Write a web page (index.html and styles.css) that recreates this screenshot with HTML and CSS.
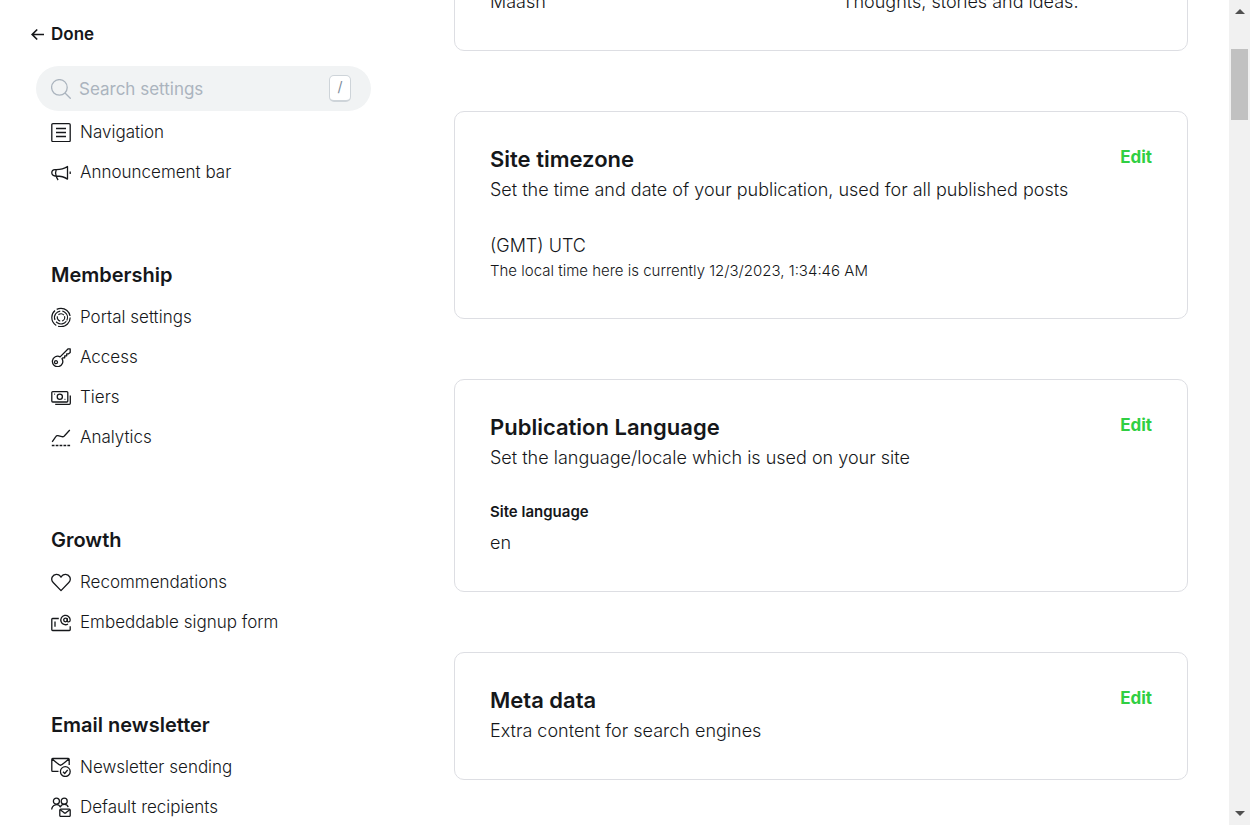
FILE: index.html
```
<!DOCTYPE html>
<html lang="en">
<head>
<meta charset="utf-8">
<meta name="viewport" content="width=device-width, initial-scale=1">
<title>Settings</title>
<link rel="stylesheet" href="styles.css">
</head>
<body>
<div class="app">
  <aside class="sidebar">
    <button class="done" type="button">
      <svg class="done-arrow" viewBox="0 0 14 14"><path d="M13 7.500H1.500M6.200 2.500 1.200 7.500l5 5"/></svg>
      <span>Done</span>
    </button>
    <div class="search">
      <svg class="icon" viewBox="0 0 20 20"><circle cx="8.4" cy="8.4" r="7.8"/><path d="m14 14 5.7 5.7"/></svg>
      <input class="search-input" type="text" placeholder="Search settings" aria-label="Search settings">
      <kbd class="key">/</kbd>
    </div>
    <nav class="nav">
      <ul class="group">
        <li><a class="item" href="#navigation"><svg class="icon" viewBox="0 0 20 20"><rect x=".8" y="1.600" width="18.4" height="18" rx="1.2"/><path d="M5 6.500h10M5 10.500h10M5 14.500h10"/></svg>Navigation</a></li>
        <li><a class="item" href="#announcement"><svg class="icon" viewBox="0 0 20 20"><path d="M5.300 7.600c5 0 8-1 11.200-3.100v12.600c-3.200-2.200-6.200-3.100-11.200-3.100H4a3.200 3.200 0 0 1 0-6.400zM19.200 9.600v2.400M5.200 7.800c-.8 2-.8 4.200 0 6.200.4 1.600 1 2.800 1.900 4"/></svg>Announcement bar</a></li>
      </ul>
      <section>
        <h2 class="group-title">Membership</h2>
        <ul class="group">
          <li><a class="item" href="#portal"><svg class="icon icon-fine" viewBox="0 0 20 20"><circle cx="10" cy="10.500" r="9.200" stroke-dasharray="17.300 2"/><circle cx="10" cy="10.500" r="6.500" stroke-dasharray="11.600 2" transform="rotate(35 10 10.500)"/><circle cx="10" cy="10.500" r="3.700" stroke-dasharray="5.900 1.850" transform="rotate(-20 10 10.500)"/></svg>Portal settings</a></li>
          <li><a class="item" href="#access"><svg class="icon" viewBox="0 0 20 20"><path d="M9.100 9.900 17.200 1.800h2v3.700l-1.600 1.300h-1.900v2h-2v2h-2l-.7.900a5.200 5.200 0 1 1-1.900-1.800z"/><circle cx="5" cy="15.200" r="1.500"/></svg>Access</a></li>
          <li><a class="item" href="#tiers"><svg class="icon" viewBox="0 0 20 20"><rect x=".8" y="4.600" width="16" height="10.400" rx="1"/><circle cx="8.800" cy="9.800" r="2.600"/><path d="M3.200 7.200h.9M13.500 12.400h.9M4.200 17.300h14.100a1 1 0 0 0 1-1V8.400"/></svg>Tiers</a></li>
          <li><a class="item" href="#analytics"><svg class="icon" viewBox="0 0 20 20"><path d="M1.200 14.800 4.800 9.600c.5-.8 1.200-1.100 2.100-.9l4 1c1 .2 1.700 0 2.400-.7l5.500-6"/><path d="M.8 18.500h18.400" stroke-dasharray="2.700 1.200"/></svg>Analytics</a></li>
        </ul>
      </section>
      <section>
        <h2 class="group-title">Growth</h2>
        <ul class="group">
          <li><a class="item" href="#recommendations"><svg class="icon" viewBox="0 0 20 20"><path d="M10 18.600 2.200 10.500A4.900 4.900 0 0 1 1.300 4.900C3.100 1.600 7.400 1.400 9.500 4.400l.5.800.5-.8c2.100-3 6.400-2.800 8.200.5a4.900 4.900 0 0 1-.9 5.600z"/></svg>Recommendations</a></li>
          <li><a class="item" href="#signup"><svg class="icon" viewBox="0 0 20 20"><path d="M7.800 6.500H1.600a.8.800 0 0 0-.8.800v10.400a.8.800 0 0 0 .8.800h16.800a.8.800 0 0 0 .8-.8v-3.400M4 9.500v5.300"/><circle cx="14.500" cy="8" r="1.800"/><path d="M16.300 6.200v2.600c0 1.600 2.900 1.600 2.900-.8a4.700 4.700 0 1 0-2.200 4"/></svg>Embeddable signup form</a></li>
        </ul>
      </section>
      <section>
        <h2 class="group-title">Email newsletter</h2>
        <ul class="group">
          <li><a class="item" href="#newsletters"><svg class="icon" viewBox="0 0 20 20"><path d="M7.500 14.300H1.700a.9.900 0 0 1-.9-.9V2.400c0-.5.4-.9.900-.9h15.600c.5 0 .9.400.9.900v5.600M1.100 2l6.800 5.600c1 .8 2.200.8 3.200 0L17.900 2"/><circle cx="14.300" cy="14.600" r="4.900"/><path d="m12 14.800 1.700 1.700 3-3.700"/></svg>Newsletter sending</a></li>
          <li><a class="item" href="#recipients"><svg class="icon" viewBox="0 0 20 20"><circle cx="5.400" cy="4.200" r="3"/><circle cx="13.200" cy="4.200" r="3"/><path d="M.7 12.600C.9 7.300 7.600 5.900 9.300 9.900c1.400-3.500 6.800-3.300 7.900.2"/><rect x="8.800" y="12.200" width="10.400" height="7.200" rx="1"/><path d="m9.200 12.800 3.700 2.800c.7.500 1.500.5 2.200 0l3.700-2.800"/></svg>Default recipients</a></li>
        </ul>
      </section>
    </nav>
  </aside>
  <main class="content">
    <section class="card card-first">
      <div class="pair">
        <p class="text">Maash</p>
        <p class="text">Thoughts, stories and ideas.</p>
      </div>
    </section>
    <section class="card">
      <header class="card-head">
        <div class="heading">
          <h3 class="title">Site timezone</h3>
          <p class="text">Set the time and date of your publication, used for all published posts</p>
        </div>
        <button class="edit" type="button">Edit</button>
      </header>
      <div>
        <p class="text">(GMT) UTC</p>
        <p class="hint">The local time here is currently 12/3/2023, 1:34:46 AM</p>
      </div>
    </section>
    <section class="card">
      <header class="card-head">
        <div class="heading">
          <h3 class="title">Publication Language</h3>
          <p class="text">Set the language/locale which is used on your site</p>
        </div>
        <button class="edit" type="button">Edit</button>
      </header>
      <div>
        <h4 class="label">Site language</h4>
        <p class="text">en</p>
      </div>
    </section>
    <section class="card">
      <header class="card-head">
        <div class="heading">
          <h3 class="title">Meta data</h3>
          <p class="text">Extra content for search engines</p>
        </div>
        <button class="edit" type="button">Edit</button>
      </header>
    </section>
  </main>
  <div class="scrollbar" aria-hidden="true">
    <svg class="scroll-arrow" viewBox="0 0 10 5"><path d="M0 5 5 0l5 5z"/></svg>
    <div class="track"><div class="thumb"></div></div>
    <svg class="scroll-arrow" viewBox="0 0 10 5"><path d="m0 0 5 5 5-5z"/></svg>
  </div>
</div>
</body>
</html>
```
FILE: styles.css
```
* {
  box-sizing: border-box;
}

body {
  margin: 0;
  background: #fff;
  color: #15171a;
  font-family: Inter, "Liberation Sans", sans-serif;
  font-weight: 300;
}

h2, h3, h4, p, ul {
  margin: 0;
  padding: 0;
}

ul {
  list-style: none;
}

button {
  border: 0;
  padding: 0;
  background: none;
  color: inherit;
  font-family: inherit;
  cursor: pointer;
}

.app {
  display: flex;
  height: 100vh;
  overflow: hidden;
}

.sidebar {
  flex: 0 0 413px;
  padding: 24px 42px 0 36px;
  overflow: hidden;
}

.done {
  display: flex;
  align-items: center;
  gap: 6px;
  margin-left: -5px;
  font-size: 17px;
  line-height: 20px;
  font-weight: 600;
}

.done-arrow {
  width: 14px;
  height: 14px;
  fill: none;
  stroke: currentColor;
  stroke-width: 1.7;
}

.search {
  display: flex;
  align-items: center;
  gap: 8px;
  height: 45px;
  margin: 22px 0 1px;
  padding: 0 20px 0 15px;
  border-radius: 23px;
  background: #f1f3f4;
  color: #abb4be;
}

.search-input {
  flex: 1;
  min-width: 0;
  padding: 0;
  border: 0;
  outline: 0;
  background: none;
  font: 400 17px/24px Inter, "Liberation Sans", sans-serif;
  color: #15171a;
}

.search-input::placeholder {
  color: #abb4be;
  opacity: 1;
}

.key {
  width: 22px;
  height: 27px;
  border: 1px solid #ced4d9;
  border-bottom-width: 2px;
  border-radius: 5px;
  background: #fff;
  color: #7c8b9a;
  font: 400 14px/22px Inter, sans-serif;
  text-align: center;
}

.nav {
  display: flex;
  flex-direction: column;
  gap: 70px;
  padding-left: 15px;
}

.group-title {
  margin-bottom: 9px;
  font-size: 20px;
  line-height: 26px;
  font-weight: 600;
}

.item {
  display: flex;
  align-items: center;
  gap: 9px;
  height: 40px;
  color: inherit;
  font-size: 17px;
  text-decoration: none;
}

.icon {
  flex: none;
  width: 20px;
  height: 20px;
  fill: none;
  stroke: currentColor;
  stroke-width: 1.3;
  stroke-linejoin: round;
}

.icon-fine {
  stroke-width: 1.2;
}

.content {
  display: flex;
  flex: 1;
  flex-direction: column;
  gap: 60px;
  min-width: 0;
  padding: 0 41px;
  overflow: hidden;
}

.card {
  display: flex;
  flex: none;
  flex-direction: column;
  gap: 30px;
  padding: 35px;
  border: 1px solid #dddee3;
  border-radius: 10px;
}

.card-first {
  margin-top: -47px;
}

.pair {
  display: grid;
  grid-template-columns: 1fr 1fr;
  column-gap: 42px;
}

.card-head {
  display: flex;
  align-items: flex-start;
  justify-content: space-between;
  gap: 20px;
}

.heading {
  display: flex;
  flex-direction: column;
  gap: 6px;
}

.title {
  font-size: 22px;
  line-height: 24px;
  font-weight: 600;
}

.text {
  font-size: 18px;
  line-height: 26px;
}

.hint {
  font-size: 15px;
  line-height: 24px;
}

.label {
  margin-bottom: 8px;
  font-size: 15px;
  line-height: 21px;
  font-weight: 600;
}

.edit {
  font-size: 17px;
  line-height: 21px;
  font-weight: 700;
  color: #30cf43;
}

.scrollbar {
  display: flex;
  flex: 0 0 21px;
  flex-direction: column;
  align-items: center;
  padding: 9px 0;
  background: #f1f1f1;
}

.scroll-arrow {
  width: 10px;
  height: 5px;
  fill: #505050;
}

.track {
  flex: 1;
  padding-top: 35px;
}

.thumb {
  width: 17px;
  height: 71px;
  background: #c1c1c1;
}
```
